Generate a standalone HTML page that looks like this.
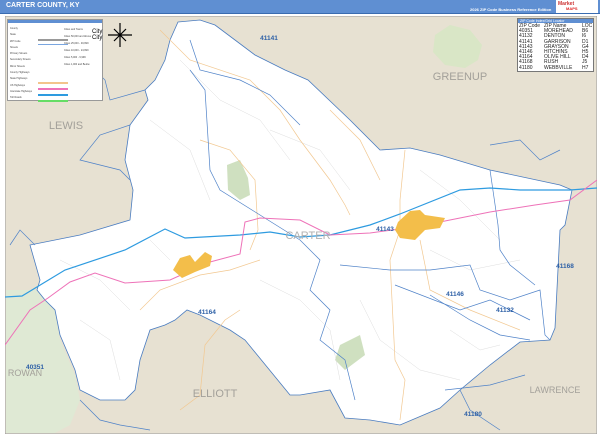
<!DOCTYPE html>
<html><head><meta charset="utf-8"><style>
body{margin:0;width:600px;height:435px;overflow:hidden;background:#fff;font-family:"Liberation Sans",sans-serif}
.hdr{position:absolute;left:0;top:0;width:600px;height:13px;background:#5f8fd2;border-bottom:1px solid #3a6cb0}
.t{position:absolute;left:6px;top:2px;color:#fff;font-weight:bold;font-size:7px}
.ed{position:absolute;left:470px;top:7px;color:#fff;font-size:4px;font-weight:bold}
.logo{position:absolute;left:556px;top:0;width:42px;height:13px;background:#fff}
.leg{position:absolute;left:7px;top:19px;width:94px;height:80px;background:#fff;border:1px solid #999;font-size:2.5px;color:#444}
.leg .h{background:#5f8fd2;height:3px}
.idx{position:absolute;left:517px;top:18px;width:75px;height:52px;background:#fff;border:1px solid #777;font-size:5px;line-height:5.2px;color:#222;overflow:hidden}
.idx .h{background:#5f8fd2;color:#fff;font-size:3.5px;height:4px;line-height:4px;padding-left:2px}
.c{position:absolute;top:5px;white-space:nowrap}
</style></head><body>
<div class="hdr"><div class="t">CARTER COUNTY, KY</div><div class="ed">2026 ZIP Code Business Reference Edition</div></div>
<div class="logo"><span style="position:absolute;left:2px;top:1px;color:#c33;font-size:5px;font-weight:bold">Market</span><span style="position:absolute;left:10px;top:6px;color:#d22;font-size:4px;font-weight:bold">MAPS</span></div>
<svg width="592" height="418" viewBox="5 16 592 418" style="position:absolute;left:5px;top:16px">
<rect x="5" y="16" width="592" height="418" fill="#e7e1d2" stroke="#999" stroke-width="1"/>
<path d="M6 290 L40 290 L55 310 L60 340 L75 375 L80 400 L70 425 L55 433 L6 433Z" fill="#dfe9d4"/>
<path d="M435 35 L450 25 L470 30 L482 45 L478 60 L465 68 L445 65 L433 52Z" fill="#d9e6c6"/>
<path d="M178 22 L200 20 L215 25 L235 40 L255 55 L285 70 L308 80 L350 120 L380 150 L410 148 L440 155 L490 170 L560 185 L572 190 L565 225 L560 230 L555 328 L550 340 L520 342 L490 365 L460 390 L440 408 L400 425 L370 420 L345 418 L330 390 L300 395 L290 395 L245 340 L230 330 L200 315 L187 310 L175 320 L165 325 L150 330 L140 360 L135 390 L125 400 L100 400 L90 395 L80 390 L75 370 L60 335 L55 310 L45 300 L37 290 L40 280 L30 245 L80 235 L130 220 L133 190 L125 160 L130 125 L148 100 L145 90 L155 80 L165 60 L170 40Z" fill="#fff" stroke="#4a7cc0" stroke-width="0.8"/>
<path d="M227 165 L240 160 L248 178 L250 195 L240 200 L228 190Z" fill="#cfe0c0"/>
<path d="M340 345 L360 335 L365 355 L345 370 L335 360Z" fill="#cfe0c0"/>
<g fill="none" stroke="#ddd" stroke-width="0.5">
<path d="M180 60 L220 100 L260 120 L290 160 M150 120 L190 150 L210 200 M60 260 L100 280 L130 310 M80 320 L110 340 L120 380 M260 280 L300 300 L330 330 L340 380 M420 170 L460 200 L500 240 M430 250 L470 270 L520 260 M360 300 L380 340 L420 370 L460 380 M270 130 L320 150 L350 190 M150 240 L170 260 M450 330 L480 350 L500 345"/>
</g>
<g fill="none" stroke="#f2c891" stroke-width="0.7">
<path d="M160 30 L190 60 L250 80 L280 110 L300 140 L330 180 L345 205 L350 215"/>
<path d="M200 140 L230 150 L255 180 L258 230 L250 250"/>
<path d="M405 150 L400 200 L400 230 L390 260 L392 300 L395 360 L405 380 L400 420"/>
<path d="M420 240 L430 290 L470 310 L520 330"/>
<path d="M140 310 L160 290 L200 275 L230 270 L260 260"/>
<path d="M240 310 L225 320 L205 345 L200 395 L180 410"/>
<path d="M330 110 L360 140 L380 180"/>
</g>
<g fill="none" stroke="#4f82c8" stroke-width="0.7">
<path d="M190 40 L200 70 L240 80 L270 95 L300 125"/>
<path d="M190 70 L205 90 L210 170 L215 180 L220 190 L300 240"/>
<path d="M300 240 L320 260 L310 290 L330 310 L320 340 L345 360 L355 400"/>
<path d="M340 265 L390 270 L430 270 L470 265 L480 290 L510 300 L540 290 L545 335 L550 340"/>
<path d="M430 295 L470 320 L500 335 L530 340"/>
<path d="M395 285 L460 310 L490 300 L510 310 L530 320"/>
<path d="M490 170 L498 225 L500 250 L510 265 L535 285"/>
<path d="M445 390 L490 385 L525 375"/>
<path d="M460 390 L470 410 L500 430"/>
<path d="M130 125 L100 135 L80 160 L120 170 L130 180"/>
<path d="M145 90 L110 100 L105 80 L95 70"/>
<path d="M490 145 L520 140 L540 160 L560 150"/>
<path d="M35 245 L20 230 L10 245"/>
<path d="M80 400 L100 420 L120 425 L150 430"/>
</g>
<path d="M5 297 L22 296 L65 270 L125 250 L165 229 L185 238 L240 235 L270 232 L300 237 L330 235 L370 225 L400 214 L460 190 L490 188 L520 190 L570 190 L597 188" fill="none" stroke="#2e9be0" stroke-width="1.2"/>
<path d="M5 345 L30 310 L48 298 L70 282 L95 273 L125 283 L170 280 L210 262 L240 254 L245 222 L260 218 L300 220 L330 235 L370 233 L400 229 L440 222 L490 212 L535 205 L570 200 L597 180" fill="none" stroke="#ee72b8" stroke-width="1"/>
<path d="M173 270 L180 258 L190 255 L195 262 L205 252 L212 256 L210 266 L195 272 L182 278Z" fill="#f3be4a"/>
<path d="M398 222 L410 211 L420 210 L425 215 L445 218 L440 228 L425 230 L415 240 L400 238 L395 230Z" fill="#f3be4a"/>
<g font-family="Liberation Sans,sans-serif" fill="#a3a09a" font-size="11" text-anchor="middle">
<text x="66" y="129">LEWIS</text><text x="460" y="80">GREENUP</text><text x="308" y="239" fill="#b0b0b0">CARTER</text>
<text x="215" y="397">ELLIOTT</text><text x="25" y="376" font-size="9">ROWAN</text><text x="555" y="393" font-size="9">LAWRENCE</text>
</g>
<g font-family="Liberation Sans,sans-serif" fill="#2c5fa6" font-size="6.5" font-weight="bold" text-anchor="middle">
<text x="269" y="40">41141</text><text x="385" y="231">41143</text><text x="455" y="296">41146</text><text x="505" y="312">41132</text>
<text x="565" y="268">41168</text><text x="207" y="314">41164</text><text x="35" y="369">40351</text><text x="473" y="416">41180</text>
</g>
<g transform="translate(120,35)" stroke="#000" stroke-width="1.2"><path d="M0 -12V12M-12 0H12M-6 -6L6 6M-6 6L6 -6"/></g>
</svg>
<div class="leg"><div class="h"></div>
<div style="position:absolute;left:2px;top:6px;line-height:6.3px">County<br>State<br>ZIP Code<br>Streets<br>Primary Streets<br>Secondary Streets<br>Minor Streets<br>County Highways<br>State Highways<br>US Highways<br>Interstate Highways<br>Toll Roads</div>
<div style="position:absolute;left:30px;top:19px;width:30px;height:1.5px;background:#999"></div>
<div style="position:absolute;left:30px;top:24px;width:30px;height:1px;background:#7aa6e0"></div>
<div style="position:absolute;left:30px;top:62px;width:30px;height:2px;background:#f3c48c"></div>
<div style="position:absolute;left:30px;top:68px;width:30px;height:2px;background:#ee72b8"></div>
<div style="position:absolute;left:30px;top:74px;width:30px;height:2px;background:#2e9be0"></div>
<div style="position:absolute;left:30px;top:80px;width:30px;height:2px;background:#6d6"></div>
<div style="position:absolute;left:56px;top:6px;line-height:7px">Cities and Towns<br>Cities 50,000 and Above<br>Cities 25,000 - 49,999<br>Cities 10,000 - 24,999<br>Cities 5,000 - 9,999<br>Cities 1,000 and Below</div>
<div style="position:absolute;left:84px;top:9px;font-size:6px;color:#000;line-height:6px">City<br>City</div>
</div>
<div class="idx"><div class="h">ZIP Code Index/Grid Locator</div>
<div class="c" style="left:1px">ZIP Code<br>40351<br>41132<br>41141<br>41143<br>41146<br>41164<br>41168<br>41180</div>
<div class="c" style="left:26px">ZIP Name<br>MOREHEAD<br>DENTON<br>GARRISON<br>GRAYSON<br>HITCHINS<br>OLIVE HILL<br>RUSH<br>WEBBVILLE</div>
<div class="c" style="left:64px">LOC<br>B6<br>I6<br>D1<br>G4<br>H5<br>D4<br>J5<br>H7</div>
</div>
</body></html>
